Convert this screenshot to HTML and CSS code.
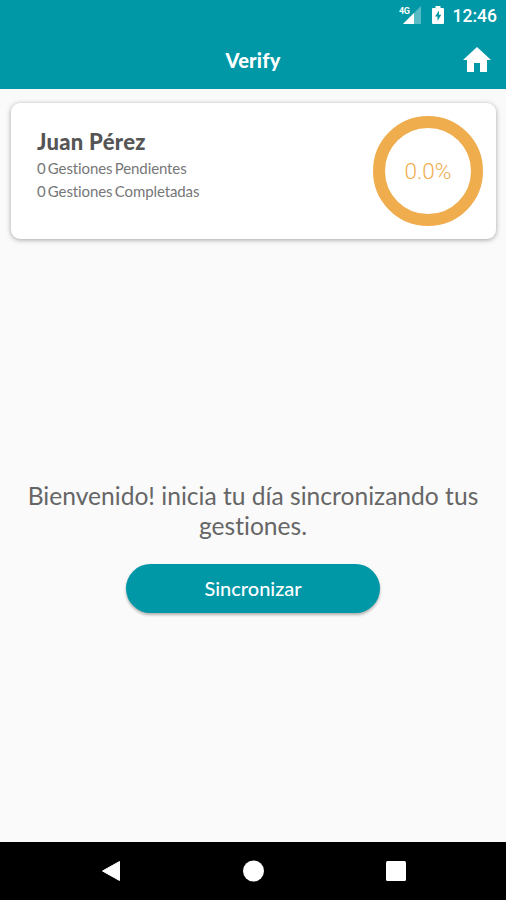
FILE: index.html
```html
<!DOCTYPE html>
<html lang="es">
<head>
<meta charset="UTF-8" />
<meta name="viewport" content="width=device-width, initial-scale=1" />
<title>Verify</title>
<link rel="stylesheet" href="styles.css">
</head>
<body>
  <div class="status-bar">
    <svg class="signal" width="23" height="20" viewBox="0 0 23 20">
      <path d="M22 1v18H4z" fill="#fff" opacity="0.35" />
      <path d="M15 8v11H4z" fill="#fff" />
      <text class="network" x="0" y="9">4G</text>
    </svg>
    <svg class="battery" width="12" height="18" viewBox="0 0 12 18">
      <path d="M3.500 0h5v2H11q1 0 1 1v14q0 1-1 1H1q-1 0-1-1V3q0-1 1-1h2.500z" fill="#fff" />
      <path d="M7 4.500L3 10.500h2.500v4.500l3.800-6.300H7z" fill="#0097a7" />
    </svg>
    <span class="clock">12:46</span>
  </div>

  <header class="app-bar">
    <h1>Verify</h1>
    <a class="home" href="#" aria-label="Inicio">
      <svg width="28" height="25" viewBox="0 0 28 25">
        <path d="M14 0l14 13h-4v12h-7v-9h-6v9H4V13H0z" fill="#fff" />
      </svg>
    </a>
  </header>

  <main>
    <section class="card">
      <div class="info">
        <h2>Juan Pérez</h2>
        <p>0 Gestiones Pendientes</p>
        <p>0 Gestiones Completadas</p>
      </div>
      <div class="progress">0.0%</div>
    </section>

    <section class="welcome">
      <p>Bienvenido! inicia tu día sincronizando tus gestiones.</p>
      <button type="button">Sincronizar</button>
    </section>
  </main>

  <nav class="nav-bar">
    <svg width="20" height="22" viewBox="0 0 20 22"><path d="M18.500 1.500v19L1.500 11z" fill="#fff" stroke="#fff" stroke-linejoin="round" /></svg>
    <svg width="22" height="22" viewBox="0 0 22 22"><circle cx="10.500" cy="11" r="10.500" fill="#fff" /></svg>
    <svg width="20" height="20" viewBox="0 0 20 20"><rect width="20" height="20" rx="1.500" fill="#fff" /></svg>
  </nav>
</body>
</html>
```

FILE: styles.css
```css
* {
  box-sizing: border-box;
}
body {
  margin: 0;
  height: 900px;
  display: flex;
  flex-direction: column;
  background: #fafafa;
  color: #666;
  font-family: Lato, sans-serif;
  font-variant-ligatures: none;
}
h1, h2, p {
  margin: 0;
}
.status-bar {
  height: 32px;
  padding-right: 9px;
  display: flex;
  align-items: center;
  justify-content: flex-end;
  background: #0097a7;
  color: white;
}
.signal {
  margin: 0 10px 2px 0;
}
.network {
  font: bold 9px Roboto, sans-serif;
  letter-spacing: -0.5px;
  fill: white;
}
.battery {
  margin: 0 9px 2px 0;
}
.clock {
  font: 500 17.500px/32px Roboto, sans-serif;
}
.app-bar {
  height: 57px;
  padding: 0 15px 2px;
  display: grid;
  grid-template-columns: 28px 1fr 28px;
  align-items: center;
  background: #0097a7;
  color: white;
}
.app-bar h1 {
  grid-column: 2;
  font-size: 20px;
  font-weight: 900;
  line-height: 24px;
  letter-spacing: 0.2px;
  text-align: center;
}
.home {
  height: 25px;
}
main {
  flex: 1;
  display: flex;
  flex-direction: column;
}
.card {
  height: 136px;
  margin: 14px 10px 0 11px;
  padding: 0 13px 0 26px;
  display: flex;
  align-items: center;
  justify-content: space-between;
  background: white;
  border-radius: 9px;
  box-shadow: 0 1px 5px rgba(0, 0, 0, 0.35);
}
.info {
  height: 86px;
}
.info h2 {
  padding-bottom: 1px;
  font-size: 22px;
  font-weight: 900;
  line-height: 28px;
  letter-spacing: 0.3px;
  color: #555;
}
.info p {
  font-size: 15px;
  line-height: 23px;
  letter-spacing: -0.1px;
  word-spacing: -1.5px;
  color: #777;
}
.progress {
  width: 110px;
  height: 110px;
  border: 12.500px solid #f0ad4e;
  border-radius: 50%;
  color: #f0ad4e;
  font: 300 22.500px/86px Roboto, sans-serif;
  text-align: center;
}
.welcome {
  margin-top: 242px;
  display: flex;
  flex-direction: column;
  align-items: center;
}
.welcome p {
  padding: 0 20px;
  font-size: 24.600px;
  line-height: 30px;
  text-align: center;
}
.welcome button {
  width: 254px;
  height: 49px;
  margin-top: 23px;
  padding: 0 0 2px;
  border: none;
  border-radius: 25px;
  background: #0097a7;
  box-shadow: 0 2px 3px rgba(0, 0, 0, 0.3);
  color: white;
  font: 500 20px Lato, sans-serif;
}
.nav-bar {
  height: 58px;
  padding: 0 100px 0 101px;
  display: flex;
  align-items: center;
  justify-content: space-between;
  background: black;
}
```
